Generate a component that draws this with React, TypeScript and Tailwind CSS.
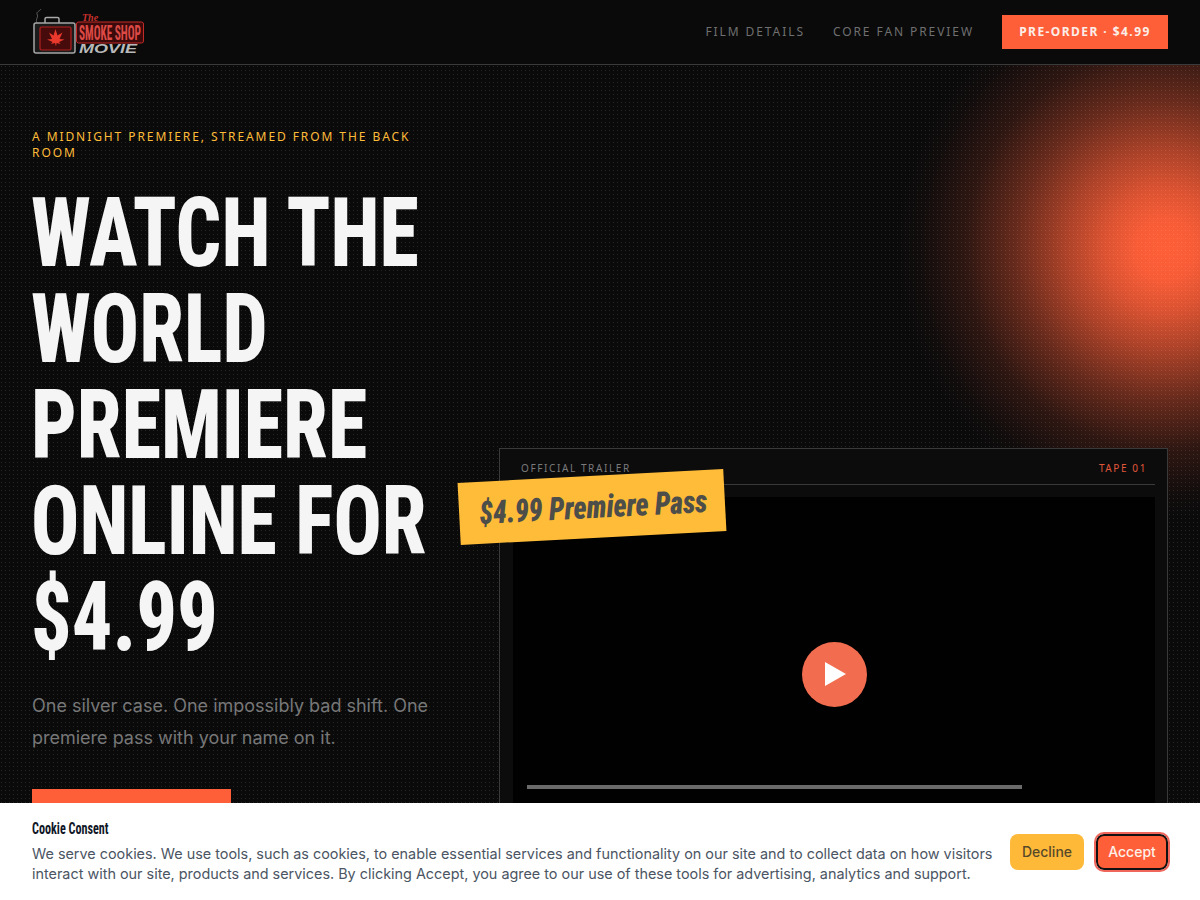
import React from 'react';

const condensed = "font-['Roboto',sans-serif] [font-stretch:75%]";

const Logo = () => (
  <svg width="116" height="46" viewBox="0 0 116 46" className="block">
    <path d="M5 14 C3 10 7 8 5 5 C4 3 8 2 9 0" fill="none" stroke="#5c5c5c" strokeWidth="1" />
    <path d="M13 14 v-4 a1.5 1.5 0 0 1 1.5 -1.5 h11 a1.5 1.5 0 0 1 1.5 1.5 v4" fill="none" stroke="#a8a8a8" strokeWidth="1.5" />
    <rect x="2" y="14" width="41" height="30" rx="2" fill="#1b1b1b" stroke="#a6a6a6" strokeWidth="1.5" />
    <rect x="8" y="18" width="31" height="23" rx="1.5" fill="#470b0c" stroke="#b3201f" strokeWidth="1.2" />
    <path d="M23.5 20 L25.5 26.5 L30.5 23.5 L27.5 30 L32.5 30.5 L27 33 L28.5 35 L24.5 34 L24 37.5 L23 34 L19 35 L20.5 33 L15 30.5 L20 30 L17 23.5 L21.5 26.5 Z" fill="#e8392c" />
    <rect x="44.5" y="13" width="67" height="21" rx="2" fill="#3c0a0b" stroke="#c32a28" strokeWidth="1" />
    <text x="50" y="11.5" fill="#c9302b" fontSize="10" fontStyle="italic" fontWeight="700" fontFamily="'Liberation Serif', serif">The</text>
    <text x="47" y="31" fill="#dd4a46" fontSize="21" fontWeight="700" fontFamily="Roboto, sans-serif" fontStretch="75%" textLength="62" lengthAdjust="spacingAndGlyphs">SMOKE SHOP</text>
    <text x="47" y="44" fill="#b9b9b9" fontSize="12" fontStyle="italic" fontWeight="700" fontFamily="'Liberation Sans', sans-serif" textLength="58" lengthAdjust="spacingAndGlyphs">MOVIE</text>
  </svg>
);

const Header = () => (
  <header className="h-[65px] border-b border-[#3a3a3a] bg-[#0a0a0b] px-8 flex items-center justify-between relative z-10">
    <Logo />
    <nav className="flex items-center font-['Noto_Sans',sans-serif] text-[12px]">
      <a className="tracking-[0.16em] text-[#6f6f6f] mr-[28px]">FILM DETAILS</a>
      <a className="tracking-[0.16em] text-[#6f6f6f] mr-[28px]">CORE FAN PREVIEW</a>
      <a className="w-[166px] h-[34px] bg-[#ff5f38] text-[#fbeee8] font-bold tracking-[0.12em] flex items-center justify-center">PRE-ORDER · $4.99</a>
    </nav>
  </header>
);

const TrailerCard = () => (
  <div className="relative w-[669px] border border-[#3a3a3a] bg-[#0c0c0d] pl-[13px] pr-[12px] pb-4">
    <div className="h-9 pt-1 border-b border-[#3a3a3a] px-2 flex items-center justify-between font-['Noto_Sans',sans-serif] text-[10px] tracking-[0.16em]">
      <span className="text-[#7a7a7a]">OFFICIAL TRAILER</span>
      <span className="text-[#e0573a]">TAPE 01</span>
    </div>
    <div className="relative mt-3 h-[354px] bg-black flex items-center justify-center">
      <div className="w-[65px] h-[65px] rounded-full bg-[#f26c4f] flex items-center justify-center pl-[3px]">
        <svg width="21" height="24" viewBox="0 0 21 24"><path d="M0 0 L21 12 L0 24 Z" fill="#fff" /></svg>
      </div>
      <div className="absolute left-[14px] top-[288px] h-1 w-[495px] bg-[#6a6a6a]" />
    </div>
    <div className={`absolute left-[-41px] top-[27px] w-[266px] h-[62px] -rotate-3 bg-[#ffbc38] flex items-center justify-center whitespace-nowrap ${condensed} font-black italic text-[32px] text-[#4d4d4a]`}>
      <span className="inline-block scale-x-[0.87] translate-x-px">$4.99 Premiere Pass</span>
    </div>
  </div>
);

const CookieBanner = () => (
  <div className="fixed inset-x-0 bottom-0 h-[97px] bg-white px-8 flex items-center justify-between z-20">
    <div className="w-[970px]">
      <h2 className={`${condensed} font-bold text-[16px] leading-5 text-[#111827] origin-left scale-x-[0.76] w-[110px]`}>Cookie Consent</h2>
      <p className="mt-[5px] font-['Inter',sans-serif] text-[14.4px] leading-5 text-[#4b5563]">
        We serve cookies. We use tools, such as cookies, to enable essential services and functionality on our site and to collect data on how visitors interact with our site, products and services. By clicking Accept, you agree to our use of these tools for advertising, analytics and support.
      </p>
    </div>
    <div className="flex items-center gap-3 font-['Inter',sans-serif] text-[14px] font-medium">
      <button className="w-[74px] h-9 rounded-lg bg-[#ffb938] text-[#574a2a]">Decline</button>
      <button className="w-[72px] h-9 rounded-lg bg-[#ff5f38] text-[#fdf0ea] border-2 border-[#111] outline-2 outline-[#f0665a]">Accept</button>
    </div>
  </div>
);

export default function App() {
  return (
    <div className="relative h-screen overflow-hidden bg-[#0a0a0b] opacity-[0.999]">
      <Header />
      <main className="relative px-8 pt-[63px] flex justify-between items-start bg-[#0a0a0b]">
        <div className="pointer-events-none absolute inset-0 bg-[radial-gradient(circle_at_1165px_185px,rgba(255,95,56,1)_0%,rgba(255,95,56,0.97)_30px,rgba(255,95,56,0.86)_60px,rgba(255,95,56,0.66)_100px,rgba(255,95,56,0.38)_150px,rgba(255,95,56,0.15)_200px,rgba(255,95,56,0.03)_245px,rgba(255,95,56,0)_270px)]" />
        <div className="pointer-events-none absolute inset-0 bg-[radial-gradient(circle_at_1.5px_1.5px,rgba(255,255,255,0.11)_0.8px,transparent_0.8px)] bg-[size:4px_4px]" />
        <section className="relative w-[435px] shrink-0">
          <p className="pt-px w-[400px] font-['Noto_Sans',sans-serif] text-[12px] leading-4 tracking-[0.16em] text-[#ffbc38]">A MIDNIGHT PREMIERE, STREAMED FROM THE BACK ROOM</p>
          <h1 className={`mt-6 w-[520px] origin-left scale-x-[0.835] -translate-x-px ${condensed} font-extrabold text-[96px] leading-[96px] text-[#f5f5f5]`}>
            <span className="block">WATCH THE</span>
            <span className="block">WORLD</span>
            <span className="block">PREMIERE</span>
            <span className="block">ONLINE FOR</span>
            <span className="block">$4.99</span>
          </h1>
          <p className="mt-[25px] w-[410px] font-['Inter',sans-serif] text-[18px] leading-8 text-[#777]">One silver case. One impossibly bad shift. One premiere pass with your name on it.</p>
          <a className="mt-[35px] block w-[199px] h-14 bg-[#ff5f38]" />
        </section>
        <section className="relative pt-[320px]">
          <TrailerCard />
        </section>
      </main>
      <CookieBanner />
    </div>
  );
}
